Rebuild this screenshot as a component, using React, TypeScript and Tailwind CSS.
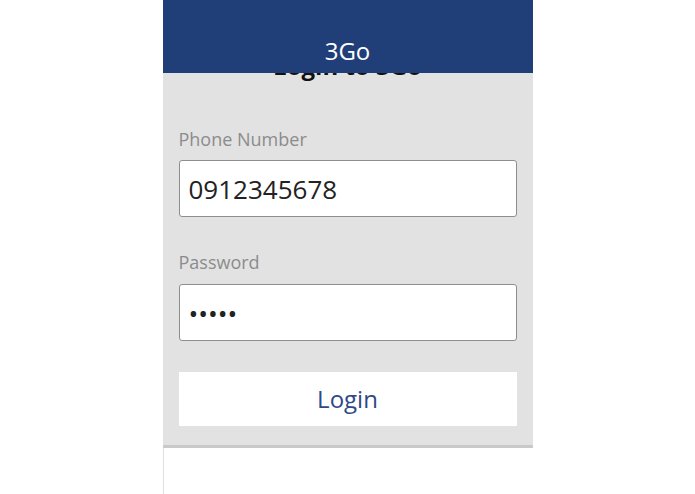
export default function App() {
  return (
    <div className="w-full h-[494px] bg-white font-['Open_Sans',sans-serif] overflow-hidden">
      <div className="relative mx-auto w-[370px] h-full flex flex-col">
        {/* header lies over the top of the form */}
        <div className="absolute top-0 inset-x-0 h-[73px] z-10 bg-[#203f79] pt-[35px] text-center">
          <span className="block text-[24px] leading-[32px] text-white">3Go</span>
        </div>

        <div className="bg-[#e2e2e2] px-[16px] pt-[50px] pb-[19px]">
          <h1 className="text-center text-[24px] leading-[32px] font-bold text-[#111]">Login to 3Go</h1>

          <label className="block mt-[45px] text-[18px] leading-[24px] text-[#8c8c8c]">Phone Number</label>
          <input
            type="text"
            readOnly
            value="0912345678"
            className="mt-[9px] block w-full h-[57px] rounded-[3px] border-[1.5px] border-[#8e8e8e] bg-white pl-[9px] text-[26px] text-[#222] outline-none"
          />

          <label className="block mt-[33px] text-[18px] leading-[24px] text-[#8c8c8c]">Password</label>
          <input
            type="password"
            readOnly
            value="12345"
            className="mt-[10px] block w-full h-[57px] rounded-[3px] border-[1.5px] border-[#8e8e8e] bg-white pl-[9px] text-[26px] text-[#222] outline-none"
          />

          <button className="mt-[31px] block w-full h-[54px] bg-white text-[24px] text-[#2d4a86]">
            Login
          </button>
        </div>
        <div className="h-[3px] bg-[#c9c9c9]" />
        <div className="flex-1 bg-white border-l border-[#e0e0e0]" />
      </div>
    </div>
  );
}
